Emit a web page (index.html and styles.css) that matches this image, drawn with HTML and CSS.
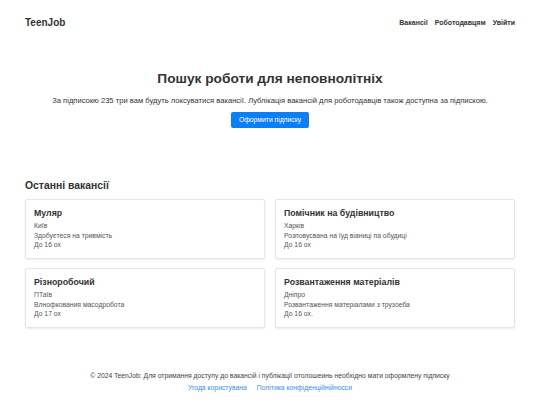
FILE: index.html
```html
<!DOCTYPE html>
<html lang="uk">
<head>
<meta charset="utf-8">
<title>TeenJob</title>
<link rel="stylesheet" href="styles.css">
</head>
<body>
<header class="header">
  <div class="logo">TeenJob</div>
  <nav class="nav">
    <a href="#">Вакансії</a>
    <a href="#">Роботодавцям</a>
    <a href="#">Увійти</a>
  </nav>
</header>
<section class="hero">
  <h1>Пошук роботи для неповнолітніх</h1>
  <p>За підписокю 235 три вам будуть локсуватися вакансії. Лублікація вакансій для роботодавців також доступна за підпискою.</p>
  <a class="btn" href="#">Оформити підписку</a>
</section>
<section class="jobs">
  <h2>Останні вакансії</h2>
  <div class="grid">
    <div class="card">
      <h3>Муляр</h3>
      <p>Київ</p>
      <p>Здобуєтеся на тривмість</p>
      <p>До 16 ох</p>
    </div>
    <div class="card">
      <h3>Помічник на будівництво</h3>
      <p>Харків</p>
      <p>Розповусвана на їуд віаниці па обудиці</p>
      <p>До 16 ох</p>
    </div>
    <div class="card">
      <h3>Різноробочий</h3>
      <p>ПТаїв</p>
      <p>Влнофкования масодробота</p>
      <p>До 17 ох</p>
    </div>
    <div class="card">
      <h3>Розвантаження матеріалів</h3>
      <p>Дніпро</p>
      <p>Розвантаження матеріалами з трузоеба</p>
      <p>До 16 ох.</p>
    </div>
  </div>
</section>
<footer class="footer">
  <p>© 2024 TeenJob: Для отримання доступу до вакансій і публікації отолошеинь необхідно мати оформлену підписку</p>
  <div class="links">
    <a href="#">Угода користувана</a>
    <a href="#">Політика конфіденційнійносси</a>
  </div>
</footer>
</body>
</html>
```
FILE: styles.css
```css
* { box-sizing: border-box; }
body {
  margin: 0;
  padding: 0 25px;
  font-family: "Liberation Sans", Arial, sans-serif;
  color: #333;
  background: #fff;
}
a { text-decoration: none; }
.header {
  display: flex;
  justify-content: space-between;
  align-items: center;
  height: 44px;
}
.logo { font-size: 10px; font-weight: bold; color: #333; }
.nav { display: flex; gap: 7px; }
.nav a { font-size: 7px; font-weight: bold; color: #333; }
.hero {
  text-align: center;
  padding-top: 26px;
}
.hero h1 {
  margin: 0;
  font-size: 13.7px;
  font-weight: bold;
  color: #333;
  line-height: 18px;
}
.hero p {
  margin: 8px 0 0;
  font-size: 7.6px;
  color: #333;
  line-height: 9px;
}
.btn {
  display: inline-block;
  margin-top: 7px;
  width: 78px;
  height: 16px;
  line-height: 16px;
  background: #0d7ff5;
  color: #fff;
  font-size: 6.8px;
  border-radius: 2px;
}
.jobs { padding-top: 51px; }
.jobs h2 {
  margin: 0 0 6px;
  font-size: 10.4px;
  font-weight: bold;
  line-height: 14px;
}
.grid {
  display: grid;
  grid-template-columns: 1fr 1fr;
  gap: 9px 10px;
}
.card {
  height: 60px;
  border: 1px solid #e6e6e6;
  border-radius: 2px;
  box-shadow: 0 1px 2px rgba(0,0,0,0.08);
  padding: 7px 8px;
}
.card h3 {
  margin: 0 0 2px;
  font-size: 8.8px;
  line-height: 12px;
  font-weight: bold;
}
.card p {
  margin: 0;
  font-size: 6.8px;
  line-height: 9.5px;
  color: #555;
}
.footer {
  text-align: center;
  padding-top: 43px;
}
.footer p {
  margin: 0;
  font-size: 6.8px;
  line-height: 9px;
  color: #444;
}
.links {
  display: flex;
  justify-content: center;
  gap: 10px;
  margin-top: 3px;
}
.links a { font-size: 6.8px; line-height: 9px; color: #3a8ee6; }
```
